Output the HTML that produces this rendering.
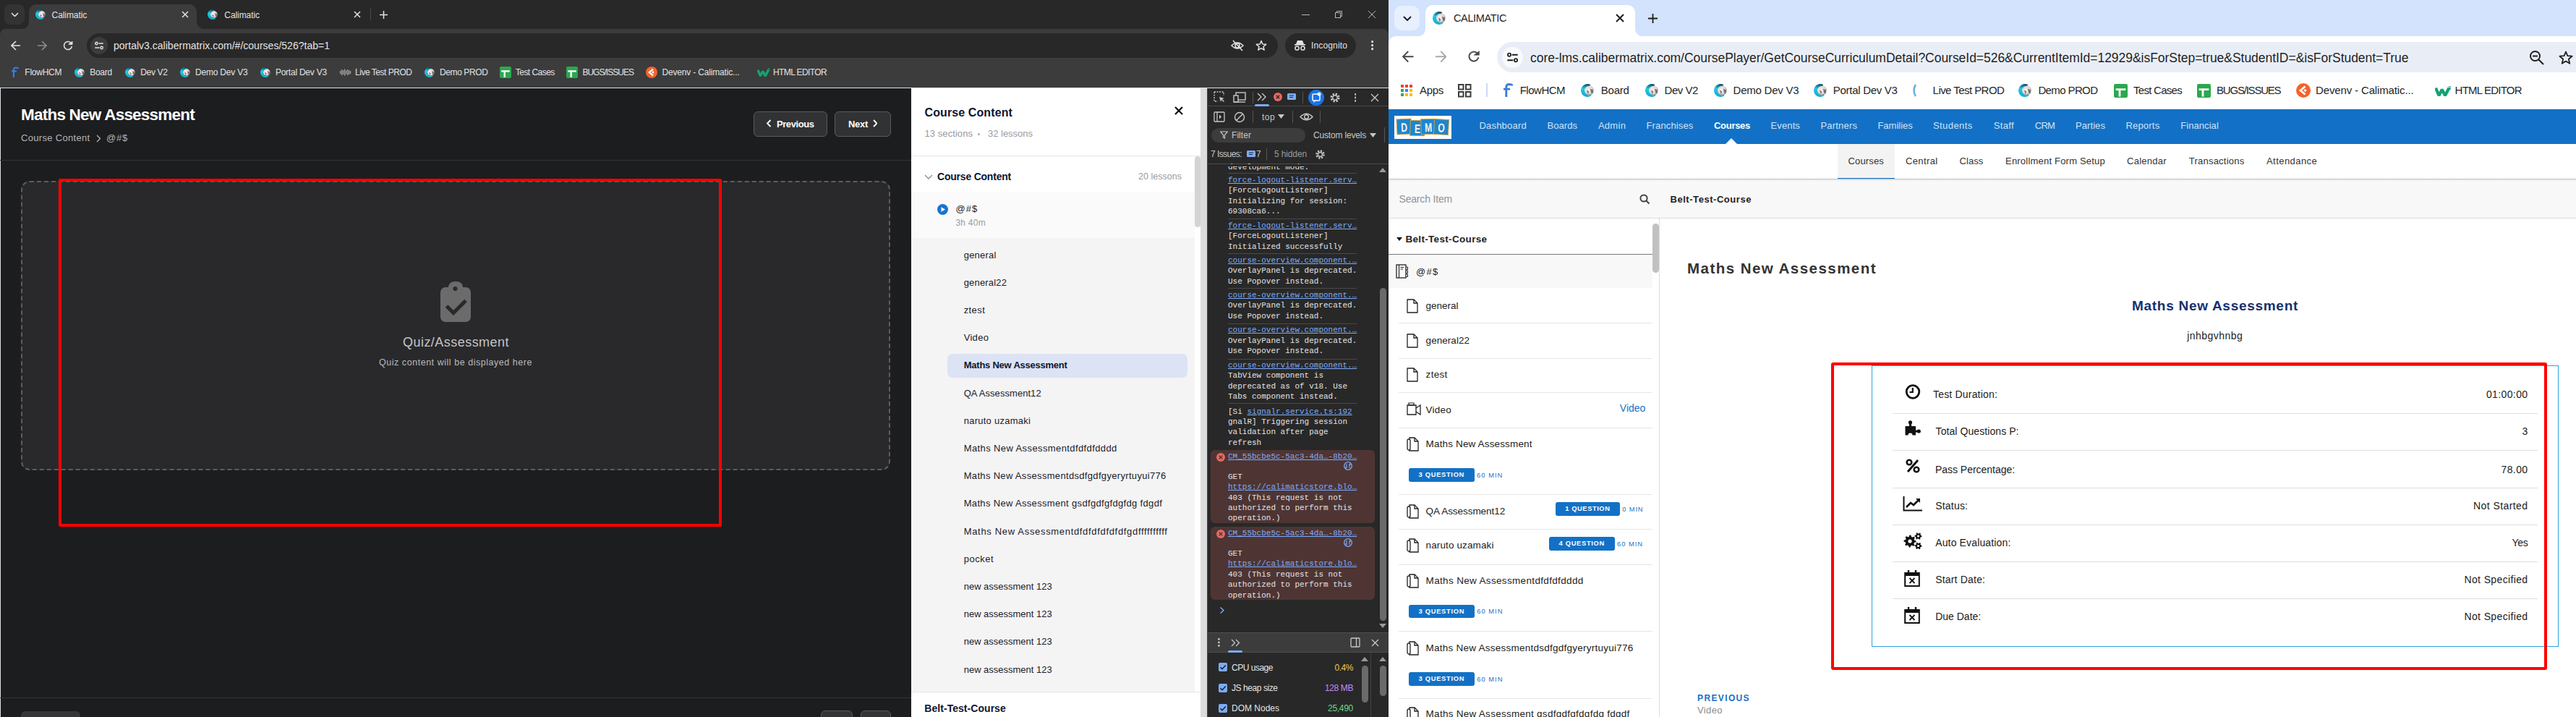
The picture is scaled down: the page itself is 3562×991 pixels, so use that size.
<!DOCTYPE html>
<html><head><meta charset="utf-8"><title>Calimatic</title>
<style>
html,body{margin:0;padding:0}
body{width:3562px;height:991px;position:relative;overflow:hidden;background:#fff;font-family:"Liberation Sans",sans-serif}
body>div,body>span,body>svg{position:absolute;box-sizing:border-box}
body>span{white-space:pre}

</style></head><body>
<div style='left:0px;top:0px;width:1920px;height:991px;background:#282828'></div>
<div style='left:6px;top:6px;width:28px;height:28px;background:#333333;border-radius:8px'></div>
<svg style='left:14.5px;top:16.75px;' width='11' height='6.5' viewBox='0 0 11 6.5'><path d='M1 1L5.5 5.5L10 1' stroke='#e3e3e3' stroke-width='1.6' fill='none'/></svg>
<div style='left:40px;top:6px;width:232px;height:40px;background:#3c3c3c;border-radius:10px 10px 0 0'></div>
<div style='left:30px;top:30px;width:10px;height:10px;background:radial-gradient(circle at 0 0, #282828 9.5px, #3c3c3c 10.5px)'></div>
<div style='left:272px;top:30px;width:10px;height:10px;background:radial-gradient(circle at 100% 0, #282828 9.5px, #3c3c3c 10.5px)'></div>
<svg style='left:48px;top:12px;' width='16' height='16' viewBox='0 0 16 16'><defs><radialGradient id='gw1' cx='0.45' cy='0.45' r='0.6'><stop offset='0' stop-color='#fbf6f6'/><stop offset='0.7' stop-color='#e6d2d2'/><stop offset='1' stop-color='#7a6a6a'/></radialGradient><linearGradient id='gc1' x1='0.6' y1='0' x2='0.3' y2='1'><stop offset='0' stop-color='#0a4f60'/><stop offset='0.45' stop-color='#1fcbe8'/><stop offset='1' stop-color='#12a7c6'/></linearGradient></defs><circle cx='9.82' cy='8.00' r='4.90' fill='url(#gw1)'/><path d='M10.55 6.29q2.45 0.24 3.67 1.47l-0.24 3.43q-1.71 0.49 -2.45 -1.96q0.49 -1.47 -0.98 -2.94z M7.37 8.00q1.71 -0.24 2.20 1.47l-0.98 2.69z' fill='#707070'/><path d='M11.29 1.82A7.00 7.00 0 1 0 12.31 13.52L12.12 12.33A4.90 4.90 0 1 1 10.67 3.17z' fill='url(#gc1)'/></svg>
<span style='left:71.6px;top:15.24px;font:400 12px/12px "Liberation Sans", sans-serif;color:#e3e3e3;letter-spacing:-0.083px;'>Calimatic</span>
<svg style='left:251.0px;top:15.0px;' width='10' height='10' viewBox='0 0 10 10'><path d='M1 1L9 9M9 1L1 9' stroke='#e3e3e3' stroke-width='1.5' fill='none'/></svg>
<svg style='left:286px;top:12px;' width='16' height='16' viewBox='0 0 16 16'><defs><radialGradient id='gw2' cx='0.45' cy='0.45' r='0.6'><stop offset='0' stop-color='#fbf6f6'/><stop offset='0.7' stop-color='#e6d2d2'/><stop offset='1' stop-color='#7a6a6a'/></radialGradient><linearGradient id='gc2' x1='0.6' y1='0' x2='0.3' y2='1'><stop offset='0' stop-color='#0a4f60'/><stop offset='0.45' stop-color='#1fcbe8'/><stop offset='1' stop-color='#12a7c6'/></linearGradient></defs><circle cx='9.82' cy='8.00' r='4.90' fill='url(#gw2)'/><path d='M10.55 6.29q2.45 0.24 3.67 1.47l-0.24 3.43q-1.71 0.49 -2.45 -1.96q0.49 -1.47 -0.98 -2.94z M7.37 8.00q1.71 -0.24 2.20 1.47l-0.98 2.69z' fill='#707070'/><path d='M11.29 1.82A7.00 7.00 0 1 0 12.31 13.52L12.12 12.33A4.90 4.90 0 1 1 10.67 3.17z' fill='url(#gc2)'/></svg>
<span style='left:310.3px;top:15.24px;font:400 12px/12px "Liberation Sans", sans-serif;color:#e3e3e3;letter-spacing:-0.083px;'>Calimatic</span>
<svg style='left:489.0px;top:15.0px;' width='10' height='10' viewBox='0 0 10 10'><path d='M1 1L9 9M9 1L1 9' stroke='#e3e3e3' stroke-width='1.5' fill='none'/></svg>
<div style='left:512px;top:12px;width:1px;height:16px;background:#4a4a4a'></div>
<svg style='left:523.5px;top:13.5px;' width='13' height='13' viewBox='0 0 13 13'><path d='M6.5 1V12M1 6.5H12' stroke='#e3e3e3' stroke-width='1.5' fill='none'/></svg>
<div style='left:1800px;top:20px;width:11px;height:1px;background:#b5b5b5'></div>
<svg style='left:1845px;top:14px;' width='12' height='12' viewBox='0 0 12 12'><rect x='1.5' y='3.5' width='7' height='7' fill='none' stroke='#b5b5b5'/><path d='M3.5 3.5V1.5H10.5V8.5H8.5' fill='none' stroke='#b5b5b5'/></svg>
<svg style='left:1891.0px;top:14.0px;' width='12' height='12' viewBox='0 0 12 12'><path d='M1 1L11 11M11 1L1 11' stroke='#b5b5b5' stroke-width='1' fill='none'/></svg>
<div style='left:0px;top:40px;width:1920px;height:81px;background:#3c3c3c;border-radius:8px 8px 0 0'></div>
<svg style='left:15.0px;top:56.0px;' width='14' height='14' viewBox='0 0 14 14'><path d='M13 7.0H1.5M7.0 1L1 7.0L7.0 13' stroke='#e3e3e3' stroke-width='1.6' fill='none'/></svg>
<svg style='left:50.8px;top:56.0px;' width='14' height='14' viewBox='0 0 14 14'><path d='M1 7.0H12.5M7.0 1L13 7.0L7.0 13' stroke='#8d8d8d' stroke-width='1.6' fill='none'/></svg>
<svg style='left:85.0px;top:54.0px;' width='18' height='18' viewBox='0 0 18 18'><path d='M14.42 9.96A5.50 5.50 0 1 1 12.68 4.91' stroke='#e3e3e3' stroke-width='1.6' fill='none'/><path d='M15.03 3.22V7.35H9.82z' fill='#e3e3e3' stroke='#e3e3e3' stroke-width='0.96' stroke-linejoin='miter'/></svg>
<div style='left:120px;top:46px;width:1647px;height:34px;background:#282828;border-radius:17px'></div>
<div style='left:125px;top:51px;width:24px;height:24px;background:#3c3c3c;border-radius:12px'></div>
<svg style='left:131.0px;top:57.0px;' width='12' height='12' viewBox='0 0 12 12'><circle cx='2.4000000000000004' cy='3.0' r='1.6800000000000002' stroke='#e3e3e3' stroke-width='1.4' fill='none'/><path d='M5.4 3.0H11.76M0.24 9.0H6.6000000000000005' stroke='#e3e3e3' stroke-width='1.4'/><circle cx='9.600000000000001' cy='9.0' r='1.6800000000000002' stroke='#e3e3e3' stroke-width='1.4' fill='none'/></svg>
<span style='left:157px;top:56.35px;font:400 14px/14px "Liberation Sans", sans-serif;color:#e3e3e3;letter-spacing:0.012px;'>portalv3.calibermatrix.com/#/courses/526?tab=1</span>
<svg style='left:1701px;top:54px;' width='20' height='18' viewBox='0 0 20 18'><path d='M2 9Q10 1 18 9Q10 17 2 9z' fill='none' stroke='#e3e3e3' stroke-width='1.6'/><circle cx='10' cy='9' r='3' fill='none' stroke='#e3e3e3' stroke-width='1.6'/><path d='M4 2L17 16' stroke='#e3e3e3' stroke-width='1.6'/></svg>
<svg style='left:1736.0px;top:55.0px;' width='16' height='16' viewBox='0 0 16 16'><polygon points='8.00,1.50 9.85,5.95 14.66,6.34 11.00,9.47 12.11,14.16 8.00,11.65 3.89,14.16 5.00,9.47 1.34,6.34 6.15,5.95' stroke='#e3e3e3' stroke-width='1.5' fill='none' stroke-linejoin='round'/></svg>
<div style='left:1777px;top:46px;width:98px;height:34px;background:#282828;border-radius:17px'></div>
<svg style='left:1789px;top:55px;' width='17' height='16' viewBox='0 0 17 16'><path d='M3 6H14L12 1H5z' fill='#e3e3e3'/><rect x='1' y='6' width='15' height='1.6' fill='#e3e3e3'/><circle cx='4.5' cy='11.5' r='2.6' fill='none' stroke='#e3e3e3' stroke-width='1.5'/><circle cx='12.5' cy='11.5' r='2.6' fill='none' stroke='#e3e3e3' stroke-width='1.5'/></svg>
<span style='left:1813px;top:56.84px;font:400 12px/12px "Liberation Sans", sans-serif;color:#e3e3e3;letter-spacing:0.144px;'>Incognito</span>
<svg style='left:1895.9px;top:56.4px;' width='3.2' height='13.2' viewBox='0 0 3.2 13.2'><circle cx='1.6' cy='1.6' r='1.6' fill='#e3e3e3'/><circle cx='1.6' cy='6.6' r='1.6' fill='#e3e3e3'/><circle cx='1.6' cy='11.6' r='1.6' fill='#e3e3e3'/></svg>
<svg style='left:15px;top:92px;' width='11.799999999999999' height='16' viewBox='0 0 11.799999999999999 16'><path d='M3.9399999999999995 15V4.8999999999999995Q3.9399999999999995 1.5 6.369999999999999 1.5Q10.299999999999999 1.5 10.299999999999999 2.8000000000000003M1 6.3H7.84' stroke='#3d7bd8' stroke-width='2.24' fill='none'/></svg>
<span style='left:34.3px;top:94.04px;font:400 12px/12px "Liberation Sans", sans-serif;color:#e3e3e3;letter-spacing:-0.239px;'>FlowHCM</span>
<svg style='left:101.5px;top:91.7px;' width='16' height='16' viewBox='0 0 16 16'><defs><radialGradient id='gw3' cx='0.45' cy='0.45' r='0.6'><stop offset='0' stop-color='#fbf6f6'/><stop offset='0.7' stop-color='#e6d2d2'/><stop offset='1' stop-color='#7a6a6a'/></radialGradient><linearGradient id='gc3' x1='0.6' y1='0' x2='0.3' y2='1'><stop offset='0' stop-color='#0a4f60'/><stop offset='0.45' stop-color='#1fcbe8'/><stop offset='1' stop-color='#12a7c6'/></linearGradient></defs><circle cx='9.82' cy='8.00' r='4.90' fill='url(#gw3)'/><path d='M10.55 6.29q2.45 0.24 3.67 1.47l-0.24 3.43q-1.71 0.49 -2.45 -1.96q0.49 -1.47 -0.98 -2.94z M7.37 8.00q1.71 -0.24 2.20 1.47l-0.98 2.69z' fill='#707070'/><path d='M11.29 1.82A7.00 7.00 0 1 0 12.31 13.52L12.12 12.33A4.90 4.90 0 1 1 10.67 3.17z' fill='url(#gc3)'/></svg>
<span style='left:124.2px;top:94.04px;font:400 12px/12px "Liberation Sans", sans-serif;color:#e3e3e3;letter-spacing:-0.246px;'>Board</span>
<svg style='left:171.7px;top:91.7px;' width='16' height='16' viewBox='0 0 16 16'><defs><radialGradient id='gw4' cx='0.45' cy='0.45' r='0.6'><stop offset='0' stop-color='#fbf6f6'/><stop offset='0.7' stop-color='#e6d2d2'/><stop offset='1' stop-color='#7a6a6a'/></radialGradient><linearGradient id='gc4' x1='0.6' y1='0' x2='0.3' y2='1'><stop offset='0' stop-color='#0a4f60'/><stop offset='0.45' stop-color='#1fcbe8'/><stop offset='1' stop-color='#12a7c6'/></linearGradient></defs><circle cx='9.82' cy='8.00' r='4.90' fill='url(#gw4)'/><path d='M10.55 6.29q2.45 0.24 3.67 1.47l-0.24 3.43q-1.71 0.49 -2.45 -1.96q0.49 -1.47 -0.98 -2.94z M7.37 8.00q1.71 -0.24 2.20 1.47l-0.98 2.69z' fill='#707070'/><path d='M11.29 1.82A7.00 7.00 0 1 0 12.31 13.52L12.12 12.33A4.90 4.90 0 1 1 10.67 3.17z' fill='url(#gc4)'/></svg>
<span style='left:194.3px;top:94.04px;font:400 12px/12px "Liberation Sans", sans-serif;color:#e3e3e3;letter-spacing:-0.343px;'>Dev V2</span>
<svg style='left:248px;top:91.7px;' width='16' height='16' viewBox='0 0 16 16'><defs><radialGradient id='gw5' cx='0.45' cy='0.45' r='0.6'><stop offset='0' stop-color='#fbf6f6'/><stop offset='0.7' stop-color='#e6d2d2'/><stop offset='1' stop-color='#7a6a6a'/></radialGradient><linearGradient id='gc5' x1='0.6' y1='0' x2='0.3' y2='1'><stop offset='0' stop-color='#0a4f60'/><stop offset='0.45' stop-color='#1fcbe8'/><stop offset='1' stop-color='#12a7c6'/></linearGradient></defs><circle cx='9.82' cy='8.00' r='4.90' fill='url(#gw5)'/><path d='M10.55 6.29q2.45 0.24 3.67 1.47l-0.24 3.43q-1.71 0.49 -2.45 -1.96q0.49 -1.47 -0.98 -2.94z M7.37 8.00q1.71 -0.24 2.20 1.47l-0.98 2.69z' fill='#707070'/><path d='M11.29 1.82A7.00 7.00 0 1 0 12.31 13.52L12.12 12.33A4.90 4.90 0 1 1 10.67 3.17z' fill='url(#gc5)'/></svg>
<span style='left:270px;top:94.04px;font:400 12px/12px "Liberation Sans", sans-serif;color:#e3e3e3;letter-spacing:-0.209px;'>Demo Dev V3</span>
<svg style='left:359px;top:91.7px;' width='16' height='16' viewBox='0 0 16 16'><defs><radialGradient id='gw6' cx='0.45' cy='0.45' r='0.6'><stop offset='0' stop-color='#fbf6f6'/><stop offset='0.7' stop-color='#e6d2d2'/><stop offset='1' stop-color='#7a6a6a'/></radialGradient><linearGradient id='gc6' x1='0.6' y1='0' x2='0.3' y2='1'><stop offset='0' stop-color='#0a4f60'/><stop offset='0.45' stop-color='#1fcbe8'/><stop offset='1' stop-color='#12a7c6'/></linearGradient></defs><circle cx='9.82' cy='8.00' r='4.90' fill='url(#gw6)'/><path d='M10.55 6.29q2.45 0.24 3.67 1.47l-0.24 3.43q-1.71 0.49 -2.45 -1.96q0.49 -1.47 -0.98 -2.94z M7.37 8.00q1.71 -0.24 2.20 1.47l-0.98 2.69z' fill='#707070'/><path d='M11.29 1.82A7.00 7.00 0 1 0 12.31 13.52L12.12 12.33A4.90 4.90 0 1 1 10.67 3.17z' fill='url(#gc6)'/></svg>
<span style='left:380.9px;top:94.04px;font:400 12px/12px "Liberation Sans", sans-serif;color:#e3e3e3;letter-spacing:-0.234px;'>Portal Dev V3</span>
<svg style='left:586px;top:91.7px;' width='16' height='16' viewBox='0 0 16 16'><defs><radialGradient id='gw7' cx='0.45' cy='0.45' r='0.6'><stop offset='0' stop-color='#fbf6f6'/><stop offset='0.7' stop-color='#e6d2d2'/><stop offset='1' stop-color='#7a6a6a'/></radialGradient><linearGradient id='gc7' x1='0.6' y1='0' x2='0.3' y2='1'><stop offset='0' stop-color='#0a4f60'/><stop offset='0.45' stop-color='#1fcbe8'/><stop offset='1' stop-color='#12a7c6'/></linearGradient></defs><circle cx='9.82' cy='8.00' r='4.90' fill='url(#gw7)'/><path d='M10.55 6.29q2.45 0.24 3.67 1.47l-0.24 3.43q-1.71 0.49 -2.45 -1.96q0.49 -1.47 -0.98 -2.94z M7.37 8.00q1.71 -0.24 2.20 1.47l-0.98 2.69z' fill='#707070'/><path d='M11.29 1.82A7.00 7.00 0 1 0 12.31 13.52L12.12 12.33A4.90 4.90 0 1 1 10.67 3.17z' fill='url(#gc7)'/></svg>
<span style='left:608px;top:94.04px;font:400 12px/12px "Liberation Sans", sans-serif;color:#e3e3e3;letter-spacing:-0.402px;'>Demo PROD</span>
<svg style='left:470px;top:94.7px;' width='16' height='10' viewBox='0 0 16 10'><rect x='0.00' y='3.00' width='1.20' height='4' fill='#aaa'/><rect x='2.00' y='1.00' width='1.20' height='8' fill='#aaa'/><rect x='4.00' y='2.00' width='1.20' height='6' fill='#aaa'/><rect x='6.00' y='0.50' width='1.20' height='9' fill='#aaa'/><rect x='8.00' y='2.50' width='1.20' height='5' fill='#aaa'/><rect x='10.00' y='1.00' width='1.20' height='8' fill='#aaa'/><rect x='12.00' y='2.00' width='1.20' height='6' fill='#aaa'/><rect x='14.00' y='3.00' width='1.20' height='4' fill='#aaa'/></svg>
<span style='left:491px;top:94.04px;font:400 12px/12px "Liberation Sans", sans-serif;color:#e3e3e3;letter-spacing:-0.475px;'>Live Test PROD</span>
<svg style='left:690.7px;top:92px;' width='16' height='16' viewBox='0 0 16 16'><rect x='0' y='0' width='16' height='16' rx='1.92' fill='#2aa84f'/><path d='M2.24 6.4H13.76M6.72 6.4V14.72' stroke='#fff' stroke-width='2.4'/></svg>
<span style='left:712.8px;top:94.04px;font:400 12px/12px "Liberation Sans", sans-serif;color:#e3e3e3;letter-spacing:-0.536px;'>Test Cases</span>
<svg style='left:782.5px;top:92px;' width='16' height='16' viewBox='0 0 16 16'><rect x='0' y='0' width='16' height='16' rx='1.92' fill='#2aa84f'/><path d='M2.24 6.4H13.76M6.72 6.4V14.72' stroke='#fff' stroke-width='2.4'/></svg>
<span style='left:805.4px;top:94.04px;font:400 12px/12px "Liberation Sans", sans-serif;color:#e3e3e3;letter-spacing:-0.978px;'>BUGS/ISSUES</span>
<svg style='left:893px;top:91.7px;' width='16' height='16' viewBox='0 0 16 16'><circle cx='8' cy='8' r='8' fill='#f4632a'/><path d='M10.0 3.6L4.8 8L10.0 12.4' stroke='#fff' stroke-width='2.24' fill='none'/><circle cx='10.0' cy='8' r='1.44' fill='#fff'/></svg>
<span style='left:915.5px;top:94.04px;font:400 12px/12px "Liberation Sans", sans-serif;color:#e3e3e3;letter-spacing:-0.176px;'>Devenv - Calimatic...</span>
<svg style='left:1047px;top:93px;' width='19.6' height='14' viewBox='0 0 19.6 14'><path d='M1 3.5999999999999996L4.368000000000001 12L7.800000000000001 5.4L11.232000000000001 12L15.600000000000001 3.5999999999999996' stroke='#14a36f' stroke-width='3.36' fill='none' stroke-linejoin='bevel'/><text x='14.352000000000002' y='5.4' font-size='6.0' fill='#14a36f' font-family='Liberation Sans' font-weight='bold'>3</text></svg>
<span style='left:1069px;top:94.04px;font:400 12px/12px "Liberation Sans", sans-serif;color:#e3e3e3;letter-spacing:-0.607px;'>HTML EDITOR</span>
<div style='left:0px;top:121px;width:1920px;height:1px;background:#dfe1e5'></div>
<div style='left:0px;top:122px;width:1260px;height:869px;background:#1c1d1f;border-left:1px solid #dfe1e5'></div>
<span style='left:29px;top:147.65px;font:700 22.5px/22.5px "Liberation Sans", sans-serif;color:#ffffff;letter-spacing:-0.776px;'>Maths New Assessment</span>
<span style='left:29px;top:183.60px;font:400 13px/13px "Liberation Sans", sans-serif;color:#b4b4b8;letter-spacing:0.317px;'>Course Content</span>
<svg style='left:132.75px;top:185.5px;' width='6.5' height='11' viewBox='0 0 6.5 11'><path d='M1 1L5.5 5.5L1 10' stroke='#b4b4b8' stroke-width='1.3' fill='none'/></svg>
<span style='left:147px;top:183.60px;font:400 13px/13px "Liberation Sans", sans-serif;color:#b4b4b8;letter-spacing:0.776px;'>@#$</span>
<div style='left:1042px;top:154px;width:102px;height:35px;background:#313234;border:1px solid #5a5b5e;border-radius:6px'></div>
<svg style='left:1060.25px;top:165.0px;' width='6.5' height='11' viewBox='0 0 6.5 11'><path d='M5.5 1L1 5.5L5.5 10' stroke='#ffffff' stroke-width='1.9' fill='none'/></svg>
<span style='left:1074px;top:165.00px;font:700 13px/13px "Liberation Sans", sans-serif;color:#ffffff;letter-spacing:-0.428px;'>Previous</span>
<div style='left:1154px;top:154px;width:78px;height:35px;background:#313234;border:1px solid #5a5b5e;border-radius:6px'></div>
<span style='left:1173px;top:165.00px;font:700 13px/13px "Liberation Sans", sans-serif;color:#ffffff;letter-spacing:-0.297px;'>Next</span>
<svg style='left:1206.75px;top:165.0px;' width='6.5' height='11' viewBox='0 0 6.5 11'><path d='M1 1L5.5 5.5L1 10' stroke='#ffffff' stroke-width='1.9' fill='none'/></svg>
<div style='left:0px;top:221px;width:1260px;height:1px;background:#333437'></div>
<div style='left:29px;top:250px;width:1202px;height:400px;background:#29292b;border:2px dashed #5c5c5e;border-radius:12px'></div>
<svg style='left:608px;top:389px;' width='44' height='57' viewBox='0 0 44 57'><rect x='1' y='8' width='42' height='48' rx='7' fill='#6b6b6b'/><rect x='12' y='0' width='20' height='16' rx='9' fill='#6b6b6b'/><circle cx='21.5' cy='10' r='3' fill='#29292b'/><path d='M9.5 34L19 43.5L36 26.5' stroke='#29292b' stroke-width='5' fill='none'/></svg>
<span style='left:630.5px;top:463.76px;transform:translateX(-50%);font:400 18px/18px "Liberation Sans", sans-serif;color:#c4c4c6;letter-spacing:0.464px;'>Quiz/Assessment</span>
<span style='left:630px;top:495.42px;transform:translateX(-50%);font:400 12.5px/12.5px "Liberation Sans", sans-serif;color:#b9b9bb;letter-spacing:0.538px;'>Quiz content will be displayed here</span>
<div style='left:0px;top:964px;width:1260px;height:1px;background:#333437'></div>
<div style='left:29px;top:983px;width:82px;height:20px;background:#353638;border-radius:6px'></div>
<div style='left:1135px;top:982px;width:44px;height:20px;background:#333436;border:1px solid #58595c;border-radius:6px'></div>
<div style='left:1190px;top:982px;width:42px;height:20px;background:#333436;border:1px solid #58595c;border-radius:6px'></div>
<div style='left:81px;top:247px;width:917px;height:481px;border:4px solid #ff0000;border-radius:2px'></div>
<div style='left:1260px;top:122px;width:410px;height:869px;background:#ffffff'></div>
<span style='left:1278.5px;top:147.96px;font:700 16px/16px "Liberation Sans", sans-serif;color:#0e1630;letter-spacing:0.107px;'>Course Content</span>
<svg style='left:1623.5px;top:147.0px;' width='12' height='12' viewBox='0 0 12 12'><path d='M1 1L11 11M11 1L1 11' stroke='#000000' stroke-width='2' fill='none'/></svg>
<span style='left:1278.5px;top:177.50px;font:400 13px/13px "Liberation Sans", sans-serif;color:#9a9aa0;letter-spacing:0.067px;'>13 sections</span>
<div style='left:1352px;top:184px;width:3px;height:3px;background:#aaa;border-radius:2px'></div>
<span style='left:1366px;top:177.50px;font:400 13px/13px "Liberation Sans", sans-serif;color:#9a9aa0;letter-spacing:-0.016px;'>32 lessons</span>
<div style='left:1260px;top:215px;width:400px;height:1px;background:#e6e6e6'></div>
<svg style='left:1278.0px;top:240.5px;' width='12' height='7.0' viewBox='0 0 12 7.0'><path d='M1 1L6.0 6.0L11 1' stroke='#8a8a90' stroke-width='1.3' fill='none'/></svg>
<span style='left:1296px;top:236.55px;font:700 14px/14px "Liberation Sans", sans-serif;color:#0e1630;letter-spacing:-0.214px;'>Course Content</span>
<span style='right:1928px;top:237.82px;font:400 12.5px/12.5px "Liberation Sans", sans-serif;color:#9a9aa0;letter-spacing:0.023px;'>20 lessons</span>
<div style='left:1260px;top:266px;width:392px;height:63px;background:#fafafa'></div>
<svg style='left:1296px;top:282px;' width='15' height='15' viewBox='0 0 15 15'><circle cx='7.5' cy='7.5' r='7.5' fill='#1a73d1'/><path d='M5.5 4.2V10.8L11 7.5z' fill='#fff'/></svg>
<span style='left:1321.4px;top:281.50px;font:400 13px/13px "Liberation Sans", sans-serif;color:#1b1b2a;letter-spacing:1.109px;'>@#$</span>
<span style='left:1321.4px;top:301.84px;font:400 12px/12px "Liberation Sans", sans-serif;color:#9a9aa0;letter-spacing:0.245px;'>3h 40m</span>
<div style='left:1260px;top:329px;width:392px;height:627px;background:#f4f4f4'></div>
<span style='left:1332.7px;top:345.60px;font:400 13px/13px "Liberation Sans", sans-serif;color:#1b1b2a;letter-spacing:0.232px;'>general</span>
<span style='left:1332.7px;top:383.80px;font:400 13px/13px "Liberation Sans", sans-serif;color:#1b1b2a;letter-spacing:0.186px;'>general22</span>
<span style='left:1332.7px;top:422.00px;font:400 13px/13px "Liberation Sans", sans-serif;color:#1b1b2a;letter-spacing:0.406px;'>ztest</span>
<span style='left:1332.7px;top:460.20px;font:400 13px/13px "Liberation Sans", sans-serif;color:#1b1b2a;letter-spacing:0.297px;'>Video</span>
<div style='left:1310px;top:489px;width:332px;height:33px;background:#dbe3f4;border-radius:7px'></div>
<span style='left:1332.7px;top:498.40px;font:700 13px/13px "Liberation Sans", sans-serif;color:#0e1630;letter-spacing:-0.232px;'>Maths New Assessment</span>
<span style='left:1332.7px;top:536.60px;font:400 13px/13px "Liberation Sans", sans-serif;color:#1b1b2a;letter-spacing:0.051px;'>QA Assessment12</span>
<span style='left:1332.7px;top:574.80px;font:400 13px/13px "Liberation Sans", sans-serif;color:#1b1b2a;letter-spacing:0.258px;'>naruto uzamaki</span>
<span style='left:1332.7px;top:613.00px;font:400 13px/13px "Liberation Sans", sans-serif;color:#1b1b2a;letter-spacing:0.394px;'>Maths New Assessmentdfdfdfdddd</span>
<span style='left:1332.7px;top:651.20px;font:400 13px/13px "Liberation Sans", sans-serif;color:#1b1b2a;letter-spacing:0.326px;'>Maths New Assessmentdsdfgdfgyeryrtuyui776</span>
<span style='left:1332.7px;top:689.40px;font:400 13px/13px "Liberation Sans", sans-serif;color:#1b1b2a;letter-spacing:0.332px;'>Maths New Assessment gsdfgdfgfdgfdg fdgdf</span>
<span style='left:1332.7px;top:727.60px;font:400 13px/13px "Liberation Sans", sans-serif;color:#1b1b2a;letter-spacing:0.676px;'>Maths New Assessmentdfdfdfdfdfdfgdffffffffff</span>
<span style='left:1332.7px;top:765.80px;font:400 13px/13px "Liberation Sans", sans-serif;color:#1b1b2a;letter-spacing:0.531px;'>pocket</span>
<span style='left:1332.7px;top:804.00px;font:400 13px/13px "Liberation Sans", sans-serif;color:#1b1b2a;letter-spacing:-0.007px;'>new assessment 123</span>
<span style='left:1332.7px;top:842.20px;font:400 13px/13px "Liberation Sans", sans-serif;color:#1b1b2a;letter-spacing:-0.007px;'>new assessment 123</span>
<span style='left:1332.7px;top:880.40px;font:400 13px/13px "Liberation Sans", sans-serif;color:#1b1b2a;letter-spacing:-0.007px;'>new assessment 123</span>
<span style='left:1332.7px;top:918.60px;font:400 13px/13px "Liberation Sans", sans-serif;color:#1b1b2a;letter-spacing:-0.007px;'>new assessment 123</span>
<div style='left:1652px;top:216px;width:8px;height:98px;background:#d4d4d4;border-radius:4px'></div>
<div style='left:1260px;top:956px;width:400px;height:1px;background:#e6e6e6'></div>
<span style='left:1278.3px;top:971.95px;font:700 14px/14px "Liberation Sans", sans-serif;color:#0e1630;letter-spacing:0.046px;'>Belt-Test-Course</span>
<div style='left:1660px;top:122px;width:9px;height:869px;background:#dcdcdc'></div>
<div style='left:1669px;top:122px;width:1px;height:869px;background:#4a4a4a'></div>
<div style='left:1670px;top:122px;width:250px;height:869px;background:#282828'></div>
<div style='left:1670px;top:146px;width:250px;height:1px;background:#4a4a4a'></div>
<svg style='left:1678px;top:126px;' width='17' height='17' viewBox='0 0 17 17'><path d='M1 1H14V6M1 1V14H6' stroke='#c7c7c7' stroke-width='1.4' fill='none' stroke-dasharray='2 1.5'/><path d='M8 8L15 10L12 11L15 14L14 15L11 12L10 15z' fill='#c7c7c7'/></svg>
<svg style='left:1705px;top:127px;' width='18' height='15' viewBox='0 0 18 15'><rect x='4' y='1' width='13' height='10' fill='none' stroke='#c7c7c7' stroke-width='1.4'/><rect x='1' y='5' width='6' height='9' fill='#282828' stroke='#c7c7c7' stroke-width='1.4'/><path d='M1 14H17' stroke='#c7c7c7' stroke-width='1.4'/></svg>
<div style='left:1732px;top:127px;width:1px;height:16px;background:#555'></div>
<svg style='left:1738px;top:128px;' width='14' height='12' viewBox='0 0 14 12'><path d='M1 1L6 6L1 11M7 1L12 6L7 11' stroke='#c7c7c7' stroke-width='1.4' fill='none'/></svg>
<div style='left:1735px;top:144px;width:20px;height:3px;background:#7cacf8;border-radius:2px'></div>
<svg style='left:1761px;top:128px;' width='12' height='12' viewBox='0 0 12 12'><circle cx='6' cy='6' r='6' fill='#e46962'/><path d='M3.8 3.8L8.2 8.2M8.2 3.8L3.8 8.2' stroke='#282828' stroke-width='1.3'/></svg>
<svg style='left:1780px;top:129px;' width='12' height='11' viewBox='0 0 12 11'><rect x='0' y='0' width='12' height='9' rx='1.5' fill='#7cacf8'/><path d='M3 3H9M3 5.5H8' stroke='#282828' stroke-width='1'/></svg>
<div style='left:1801px;top:127px;width:1px;height:16px;background:#555'></div>
<svg style='left:1809px;top:124px;' width='22' height='22' viewBox='0 0 22 22'><circle cx='11' cy='11' r='11' fill='#1a73e8'/><rect x='6' y='6' width='10' height='9' rx='1.5' fill='none' stroke='#fff' stroke-width='1.5'/><path d='M8 15L7 18L11 15' fill='#fff'/><circle cx='15' cy='6' r='2.5' fill='#fff'/></svg>
<svg style='left:1838px;top:127px;' width='16' height='16' viewBox='0 0 16 16'><circle cx='8' cy='8' r='5.2' fill='none' stroke='#c7c7c7' stroke-width='2.6' stroke-dasharray='2.2 1.9'/><circle cx='8' cy='8' r='3.2' fill='none' stroke='#c7c7c7' stroke-width='1.4'/></svg>
<svg style='left:1872.6px;top:129.1px;' width='2.8' height='11.8' viewBox='0 0 2.8 11.8'><circle cx='1.4' cy='1.4' r='1.4' fill='#c7c7c7'/><circle cx='1.4' cy='5.9' r='1.4' fill='#c7c7c7'/><circle cx='1.4' cy='10.4' r='1.4' fill='#c7c7c7'/></svg>
<svg style='left:1895.0px;top:129.0px;' width='12' height='12' viewBox='0 0 12 12'><path d='M1 1L11 11M11 1L1 11' stroke='#c7c7c7' stroke-width='1.4' fill='none'/></svg>
<svg style='left:1678px;top:154px;' width='16' height='15' viewBox='0 0 16 15'><rect x='1' y='1' width='14' height='13' rx='1' fill='none' stroke='#c7c7c7' stroke-width='1.3'/><path d='M5 1V14' stroke='#c7c7c7' stroke-width='1.3'/><path d='M8 4.5L11 7.5L8 10.5z' fill='#c7c7c7'/></svg>
<svg style='left:1706px;top:154px;' width='16' height='16' viewBox='0 0 16 16'><circle cx='8' cy='8' r='6.5' fill='none' stroke='#c7c7c7' stroke-width='1.4'/><path d='M3.5 12.5L12.5 3.5' stroke='#c7c7c7' stroke-width='1.4'/></svg>
<div style='left:1732px;top:153px;width:1px;height:17px;background:#555'></div>
<span style='left:1745px;top:155.84px;font:400 12px/12px "Liberation Sans", sans-serif;color:#c7c7c7;letter-spacing:0.438px;'>top</span>
<svg style='left:1767px;top:158px;' width='9' height='6' viewBox='0 0 9 6'><path d='M0 0H9L4.5 6z' fill='#c7c7c7'/></svg>
<div style='left:1787px;top:153px;width:1px;height:17px;background:#555'></div>
<svg style='left:1797px;top:155px;' width='19' height='13' viewBox='0 0 19 13'><path d='M1 6.5Q9.5 -2 18 6.5Q9.5 15 1 6.5z' fill='none' stroke='#c7c7c7' stroke-width='1.4'/><circle cx='9.5' cy='6.5' r='2.8' fill='none' stroke='#c7c7c7' stroke-width='1.4'/></svg>
<div style='left:1825px;top:153px;width:1px;height:17px;background:#555'></div>
<div style='left:1675px;top:177px;width:130px;height:20px;background:#3c3c3c;border-radius:10px'></div>
<svg style='left:1687px;top:181px;' width='11' height='11' viewBox='0 0 11 11'><path d='M0.5 1H10.5L6.5 5.5V10L4.5 9V5.5z' fill='none' stroke='#c7c7c7' stroke-width='1.2'/></svg>
<span style='left:1703px;top:181.34px;font:400 12px/12px "Liberation Sans", sans-serif;color:#c7c7c7;letter-spacing:0.055px;'>Filter</span>
<span style='left:1816px;top:181.34px;font:400 12px/12px "Liberation Sans", sans-serif;color:#c7c7c7;letter-spacing:-0.181px;'>Custom levels</span>
<svg style='left:1894px;top:184px;' width='9' height='6' viewBox='0 0 9 6'><path d='M0 0H9L4.5 6z' fill='#c7c7c7'/></svg>
<div style='left:1914px;top:176px;width:1px;height:21px;background:#555'></div>
<span style='left:1674px;top:207.34px;font:400 12px/12px "Liberation Sans", sans-serif;color:#c7c7c7;letter-spacing:-0.559px;'>7 Issues:</span>
<svg style='left:1724px;top:208px;' width='12' height='11' viewBox='0 0 12 11'><rect x='0' y='0' width='12' height='9' rx='1.5' fill='#7cacf8'/><path d='M3 3H9M3 5.5H8' stroke='#282828' stroke-width='1'/></svg>
<span style='left:1737px;top:207.34px;font:400 12px/12px "Liberation Sans", sans-serif;color:#c7c7c7;letter-spacing:0.312px;'>7</span>
<div style='left:1751px;top:205px;width:1px;height:17px;background:#555'></div>
<span style='left:1762px;top:207.34px;font:400 12px/12px "Liberation Sans", sans-serif;color:#9a9a9a;letter-spacing:-0.131px;'>5 hidden</span>
<svg style='left:1818px;top:206px;' width='15' height='15' viewBox='0 0 15 15'><circle cx='7.5' cy='7.5' r='5' fill='none' stroke='#c7c7c7' stroke-width='2.5' stroke-dasharray='2.1 1.8'/><circle cx='7.5' cy='7.5' r='3' fill='none' stroke='#c7c7c7' stroke-width='1.3'/></svg>
<div style='left:1670px;top:226px;width:250px;height:1px;background:#4a4a4a'></div>
<div style='left:1670px;top:227px;width:236px;height:9px;background:#282828;overflow:hidden'></div>
<span style='left:1698px;top:225.57px;font:400 11px/11px "Liberation Mono", monospace;color:#e3e3e3;letter-spacing:0.000px;'>development mode.</span>
<div style='left:1670px;top:227px;width:236px;height:3px;background:#282828'></div>
<div style='left:1698px;top:238.5px;width:178px;height:1px;background:#4a4a4a'></div>
<span style='left:1698px;top:243.77px;font:400 11px/11px "Liberation Mono", monospace;color:#7cacf8;letter-spacing:0.000px;text-decoration:underline'>force-logout-listener.serv…</span>
<span style='left:1698px;top:258.17px;font:400 11px/11px "Liberation Mono", monospace;color:#e3e3e3;letter-spacing:0.000px;'>[ForceLogoutListener]</span>
<span style='left:1698px;top:272.57px;font:400 11px/11px "Liberation Mono", monospace;color:#e3e3e3;letter-spacing:0.000px;'>Initializing for session:</span>
<span style='left:1698px;top:286.97px;font:400 11px/11px "Liberation Mono", monospace;color:#e3e3e3;letter-spacing:0.000px;'>69308ca6...</span>
<span style='left:1698px;top:306.87px;font:400 11px/11px "Liberation Mono", monospace;color:#7cacf8;letter-spacing:0.000px;text-decoration:underline'>force-logout-listener.serv…</span>
<span style='left:1698px;top:321.27px;font:400 11px/11px "Liberation Mono", monospace;color:#e3e3e3;letter-spacing:0.000px;'>[ForceLogoutListener]</span>
<span style='left:1698px;top:335.67px;font:400 11px/11px "Liberation Mono", monospace;color:#e3e3e3;letter-spacing:0.000px;'>Initialized successfully</span>
<span style='left:1698px;top:354.97px;font:400 11px/11px "Liberation Mono", monospace;color:#7cacf8;letter-spacing:0.000px;text-decoration:underline'>course-overview.component.…</span>
<span style='left:1698px;top:369.37px;font:400 11px/11px "Liberation Mono", monospace;color:#e3e3e3;letter-spacing:0.000px;'>OverlayPanel is deprecated.</span>
<span style='left:1698px;top:383.77px;font:400 11px/11px "Liberation Mono", monospace;color:#e3e3e3;letter-spacing:0.000px;'>Use Popover instead.</span>
<span style='left:1698px;top:403.07px;font:400 11px/11px "Liberation Mono", monospace;color:#7cacf8;letter-spacing:0.000px;text-decoration:underline'>course-overview.component.…</span>
<span style='left:1698px;top:417.47px;font:400 11px/11px "Liberation Mono", monospace;color:#e3e3e3;letter-spacing:0.000px;'>OverlayPanel is deprecated.</span>
<span style='left:1698px;top:431.87px;font:400 11px/11px "Liberation Mono", monospace;color:#e3e3e3;letter-spacing:0.000px;'>Use Popover instead.</span>
<span style='left:1698px;top:451.17px;font:400 11px/11px "Liberation Mono", monospace;color:#7cacf8;letter-spacing:0.000px;text-decoration:underline'>course-overview.component.…</span>
<span style='left:1698px;top:465.57px;font:400 11px/11px "Liberation Mono", monospace;color:#e3e3e3;letter-spacing:0.000px;'>OverlayPanel is deprecated.</span>
<span style='left:1698px;top:479.97px;font:400 11px/11px "Liberation Mono", monospace;color:#e3e3e3;letter-spacing:0.000px;'>Use Popover instead.</span>
<span style='left:1698px;top:499.97px;font:400 11px/11px "Liberation Mono", monospace;color:#7cacf8;letter-spacing:0.000px;text-decoration:underline'>course-overview.component.…</span>
<span style='left:1698px;top:514.37px;font:400 11px/11px "Liberation Mono", monospace;color:#e3e3e3;letter-spacing:0.000px;'>TabView component is</span>
<span style='left:1698px;top:528.77px;font:400 11px/11px "Liberation Mono", monospace;color:#e3e3e3;letter-spacing:0.000px;'>deprecated as of v18. Use</span>
<span style='left:1698px;top:543.17px;font:400 11px/11px "Liberation Mono", monospace;color:#e3e3e3;letter-spacing:0.000px;'>Tabs component instead.</span>
<div style='left:1698px;top:302.2px;width:178px;height:1px;background:#4a4a4a'></div>
<div style='left:1698px;top:350.4px;width:178px;height:1px;background:#4a4a4a'></div>
<div style='left:1698px;top:398.3px;width:178px;height:1px;background:#4a4a4a'></div>
<div style='left:1698px;top:447.2px;width:178px;height:1px;background:#4a4a4a'></div>
<div style='left:1698px;top:495.8px;width:178px;height:1px;background:#4a4a4a'></div>
<div style='left:1698px;top:557.4px;width:178px;height:1px;background:#4a4a4a'></div>
<span style='left:1698px;top:563.57px;font:400 11px/11px "Liberation Mono", monospace;color:#e3e3e3;letter-spacing:0.000px;'>[Si</span>
<span style='left:1724.5px;top:563.57px;font:400 11px/11px "Liberation Mono", monospace;color:#7cacf8;letter-spacing:0.000px;text-decoration:underline'>signalr.service.ts:192</span>
<span style='left:1698px;top:577.97px;font:400 11px/11px "Liberation Mono", monospace;color:#e3e3e3;letter-spacing:0.000px;'>gnalR] Triggering session</span>
<span style='left:1698px;top:592.37px;font:400 11px/11px "Liberation Mono", monospace;color:#e3e3e3;letter-spacing:0.000px;'>validation after page</span>
<span style='left:1698px;top:606.77px;font:400 11px/11px "Liberation Mono", monospace;color:#e3e3e3;letter-spacing:0.000px;'>refresh</span>
<div style='left:1674px;top:622.3px;width:227px;height:100.5px;background:#4e3534;border-radius:6px'></div>
<svg style='left:1682px;top:625.8px;' width='12' height='12' viewBox='0 0 12 12'><circle cx='6' cy='6' r='6' fill='#e46962'/><path d='M3.8 3.8L8.2 8.2M8.2 3.8L3.8 8.2' stroke='#4e3534' stroke-width='1.4'/></svg>
<span style='left:1698px;top:626.37px;font:400 11px/11px "Liberation Mono", monospace;color:#7cacf8;letter-spacing:0.000px;text-decoration:underline'>CM_55bcbe5c-5ac3-4da…-8b20…</span>
<svg style='left:1858px;top:637.8px;' width='12' height='12' viewBox='0 0 12 12'><circle cx='6' cy='6' r='5.3' fill='none' stroke='#7cacf8' stroke-width='1.3'/><path d='M4 3V9M4 9L2.5 7.5M8 9V3M8 3L9.5 4.5' stroke='#7cacf8' stroke-width='1.1' fill='none'/></svg>
<span style='left:1698px;top:653.87px;font:400 11px/11px "Liberation Mono", monospace;color:#e3e3e3;letter-spacing:0.000px;'>GET</span>
<span style='left:1698px;top:668.27px;font:400 11px/11px "Liberation Mono", monospace;color:#7cacf8;letter-spacing:0.000px;text-decoration:underline'>https://calimaticstore.blo…</span>
<span style='left:1698px;top:682.67px;font:400 11px/11px "Liberation Mono", monospace;color:#e3e3e3;letter-spacing:0.000px;'>403 (This request is not</span>
<span style='left:1698px;top:697.07px;font:400 11px/11px "Liberation Mono", monospace;color:#e3e3e3;letter-spacing:0.000px;'>authorized to perform this</span>
<span style='left:1698px;top:711.47px;font:400 11px/11px "Liberation Mono", monospace;color:#e3e3e3;letter-spacing:0.000px;'>operation.)</span>
<div style='left:1674px;top:728.4px;width:227px;height:100.5px;background:#4e3534;border-radius:6px'></div>
<svg style='left:1682px;top:731.9px;' width='12' height='12' viewBox='0 0 12 12'><circle cx='6' cy='6' r='6' fill='#e46962'/><path d='M3.8 3.8L8.2 8.2M8.2 3.8L3.8 8.2' stroke='#4e3534' stroke-width='1.4'/></svg>
<span style='left:1698px;top:732.47px;font:400 11px/11px "Liberation Mono", monospace;color:#7cacf8;letter-spacing:0.000px;text-decoration:underline'>CM_55bcbe5c-5ac3-4da…-8b20…</span>
<svg style='left:1858px;top:743.9px;' width='12' height='12' viewBox='0 0 12 12'><circle cx='6' cy='6' r='5.3' fill='none' stroke='#7cacf8' stroke-width='1.3'/><path d='M4 3V9M4 9L2.5 7.5M8 9V3M8 3L9.5 4.5' stroke='#7cacf8' stroke-width='1.1' fill='none'/></svg>
<span style='left:1698px;top:759.97px;font:400 11px/11px "Liberation Mono", monospace;color:#e3e3e3;letter-spacing:0.000px;'>GET</span>
<span style='left:1698px;top:774.37px;font:400 11px/11px "Liberation Mono", monospace;color:#7cacf8;letter-spacing:0.000px;text-decoration:underline'>https://calimaticstore.blo…</span>
<span style='left:1698px;top:788.77px;font:400 11px/11px "Liberation Mono", monospace;color:#e3e3e3;letter-spacing:0.000px;'>403 (This request is not</span>
<span style='left:1698px;top:803.17px;font:400 11px/11px "Liberation Mono", monospace;color:#e3e3e3;letter-spacing:0.000px;'>authorized to perform this</span>
<span style='left:1698px;top:817.57px;font:400 11px/11px "Liberation Mono", monospace;color:#e3e3e3;letter-spacing:0.000px;'>operation.)</span>
<svg style='left:1686px;top:838px;' width='8' height='11' viewBox='0 0 8 11'><path d='M1.5 1.5L6 5.5L1.5 9.5' stroke='#7cacf8' stroke-width='1.4' fill='none'/></svg>
<svg style='left:1906px;top:231px;' width='12' height='8' viewBox='0 0 12 8'><path d='M1 7H11L6 1z' fill='#9a9a9a'/></svg>
<div style='left:1908px;top:398px;width:9px;height:460px;background:#6a6a6a;border-radius:5px'></div>
<svg style='left:1906px;top:861px;' width='12' height='8' viewBox='0 0 12 8'><path d='M1 1H11L6 7z' fill='#9a9a9a'/></svg>
<div style='left:1670px;top:874px;width:250px;height:1px;background:#4f4f4f'></div>
<div style='left:1670px;top:875px;width:250px;height:26px;background:#3c3c3c'></div>
<div style='left:1670px;top:901px;width:250px;height:1px;background:#4f4f4f'></div>
<svg style='left:1684.1999999999998px;top:882.1px;' width='2.8' height='11.8' viewBox='0 0 2.8 11.8'><circle cx='1.4' cy='1.4' r='1.4' fill='#c7c7c7'/><circle cx='1.4' cy='5.9' r='1.4' fill='#c7c7c7'/><circle cx='1.4' cy='10.4' r='1.4' fill='#c7c7c7'/></svg>
<svg style='left:1702px;top:883px;' width='14' height='11' viewBox='0 0 14 11'><path d='M1 1L5.5 5.5L1 10M7 1L11.5 5.5L7 10' stroke='#c7c7c7' stroke-width='1.3' fill='none'/></svg>
<div style='left:1698px;top:898.5px;width:20px;height:3px;background:#7cacf8;border-radius:2px'></div>
<svg style='left:1867px;top:881px;' width='14' height='14' viewBox='0 0 14 14'><rect x='1' y='1' width='12' height='12' rx='1' fill='none' stroke='#c7c7c7' stroke-width='1.3'/><path d='M8.5 1V13' stroke='#c7c7c7' stroke-width='1.3'/></svg>
<svg style='left:1895.5px;top:882.5px;' width='11' height='11' viewBox='0 0 11 11'><path d='M1 1L10 10M10 1L1 10' stroke='#c7c7c7' stroke-width='1.3' fill='none'/></svg>
<svg style='left:1685px;top:916.4px;' width='12' height='12' viewBox='0 0 12 12'><rect x='0' y='0' width='12' height='12' rx='2' fill='#7cacf8'/><path d='M2.5 6.2L5 8.7L9.8 3.6' stroke='#1f1f1f' stroke-width='1.5' fill='none'/></svg>
<span style='left:1703px;top:916.54px;font:400 12px/12px "Liberation Sans", sans-serif;color:#e3e3e3;letter-spacing:-0.486px;'>CPU usage</span>
<span style='right:1691px;top:916.54px;font:400 12px/12px "Liberation Sans", sans-serif;color:#f2c84b;letter-spacing:-0.465px;'>0.4%</span>
<svg style='left:1685px;top:944.7px;' width='12' height='12' viewBox='0 0 12 12'><rect x='0' y='0' width='12' height='12' rx='2' fill='#7cacf8'/><path d='M2.5 6.2L5 8.7L9.8 3.6' stroke='#1f1f1f' stroke-width='1.5' fill='none'/></svg>
<span style='left:1703px;top:944.84px;font:400 12px/12px "Liberation Sans", sans-serif;color:#e3e3e3;letter-spacing:-0.435px;'>JS heap size</span>
<span style='right:1691px;top:944.84px;font:400 12px/12px "Liberation Sans", sans-serif;color:#c58af9;letter-spacing:-0.393px;'>128 MB</span>
<svg style='left:1685px;top:972.8px;' width='12' height='12' viewBox='0 0 12 12'><rect x='0' y='0' width='12' height='12' rx='2' fill='#7cacf8'/><path d='M2.5 6.2L5 8.7L9.8 3.6' stroke='#1f1f1f' stroke-width='1.5' fill='none'/></svg>
<span style='left:1703px;top:972.94px;font:400 12px/12px "Liberation Sans", sans-serif;color:#e3e3e3;letter-spacing:-0.003px;'>DOM Nodes</span>
<span style='right:1691px;top:972.94px;font:400 12px/12px "Liberation Sans", sans-serif;color:#6bd88c;letter-spacing:-0.284px;'>25,490</span>
<svg style='left:1881px;top:907px;' width='12' height='8' viewBox='0 0 12 8'><path d='M1 7H11L6 1z' fill='#9a9a9a'/></svg>
<div style='left:1883px;top:920px;width:9px;height:51px;background:#6a6a6a;border-radius:5px'></div>
<div style='left:1895px;top:902px;width:1px;height:89px;background:#444'></div>
<svg style='left:1906px;top:907px;' width='12' height='8' viewBox='0 0 12 8'><path d='M1 7H11L6 1z' fill='#9a9a9a'/></svg>
<div style='left:1908px;top:920px;width:9px;height:42px;background:#6a6a6a;border-radius:5px'></div>
<div style='left:1920px;top:0px;width:1642px;height:991px;background:#ffffff'></div>
<div style='left:1920px;top:0px;width:1642px;height:62px;background:#d3e3fd'></div>
<div style='left:1928px;top:8px;width:35px;height:34px;background:#e8f0fe;border-radius:10px'></div>
<svg style='left:1940.0px;top:21.5px;' width='12' height='7.0' viewBox='0 0 12 7.0'><path d='M1 1L6.0 6.0L11 1' stroke='#1f1f1f' stroke-width='2' fill='none'/></svg>
<div style='left:1971px;top:7px;width:290px;height:44px;background:#ffffff;border-radius:10px 10px 0 0'></div>
<div style='left:1961px;top:40px;width:10px;height:10px;background:radial-gradient(circle at 0 0, #d3e3fd 9.5px, #ffffff 10.5px)'></div>
<div style='left:2261px;top:40px;width:10px;height:10px;background:radial-gradient(circle at 100% 0, #d3e3fd 9.5px, #ffffff 10.5px)'></div>
<svg style='left:1980px;top:15px;' width='20' height='20' viewBox='0 0 20 20'><defs><radialGradient id='gw8' cx='0.45' cy='0.45' r='0.6'><stop offset='0' stop-color='#fbf6f6'/><stop offset='0.7' stop-color='#e6d2d2'/><stop offset='1' stop-color='#7a6a6a'/></radialGradient><linearGradient id='gc8' x1='0.6' y1='0' x2='0.3' y2='1'><stop offset='0' stop-color='#0a4f60'/><stop offset='0.45' stop-color='#1fcbe8'/><stop offset='1' stop-color='#12a7c6'/></linearGradient></defs><circle cx='12.34' cy='10.00' r='6.30' fill='url(#gw8)'/><path d='M13.29 7.79q3.15 0.32 4.72 1.89l-0.32 4.41q-2.20 0.63 -3.15 -2.52q0.63 -1.89 -1.26 -3.78z M9.19 10.00q2.20 -0.32 2.83 1.89l-1.26 3.47z' fill='#707070'/><path d='M14.23 2.05A9.00 9.00 0 1 0 15.54 17.09L15.30 15.56A6.30 6.30 0 1 1 13.43 3.80z' fill='url(#gc8)'/></svg>
<span style='left:2010px;top:18.33px;font:400 14.5px/14.5px "Liberation Sans", sans-serif;color:#1f1f1f;letter-spacing:-0.365px;'>CALIMATIC</span>
<svg style='left:2234.0px;top:19.0px;' width='12' height='12' viewBox='0 0 12 12'><path d='M1 1L11 11M11 1L1 11' stroke='#1f1f1f' stroke-width='2' fill='none'/></svg>
<svg style='left:2277.5px;top:17.5px;' width='15' height='15' viewBox='0 0 15 15'><path d='M7.5 1V14M1 7.5H14' stroke='#1f1f1f' stroke-width='1.8' fill='none'/></svg>
<div style='left:1920px;top:50px;width:1642px;height:101px;background:#ffffff;border-radius:10px 0 0 0'></div>
<svg style='left:1939.25px;top:70.25px;' width='16.5' height='16.5' viewBox='0 0 16.5 16.5'><path d='M15.5 8.25H1.5M8.25 1L1 8.25L8.25 15.5' stroke='#474747' stroke-width='1.8' fill='none'/></svg>
<svg style='left:1983.75px;top:70.25px;' width='16.5' height='16.5' viewBox='0 0 16.5 16.5'><path d='M1 8.25H15.0M8.25 1L15.5 8.25L8.25 15.5' stroke='#a8a8a8' stroke-width='1.8' fill='none'/></svg>
<svg style='left:2027.5px;top:68.0px;' width='20' height='20' viewBox='0 0 20 20'><path d='M16.40 11.13A6.50 6.50 0 1 1 14.35 5.17' stroke='#474747' stroke-width='1.9' fill='none'/><path d='M17.13 3.17V8.05H10.97z' fill='#474747' stroke='#474747' stroke-width='1.14' stroke-linejoin='miter'/></svg>
<div style='left:2070px;top:58px;width:1550px;height:42px;background:#e9eef6;border-radius:21px'></div>
<div style='left:2077px;top:65px;width:29px;height:29px;background:#f8fafd;border-radius:15px'></div>
<svg style='left:2084.0px;top:71.5px;' width='15' height='15' viewBox='0 0 15 15'><circle cx='3.0' cy='3.75' r='2.1' stroke='#1f1f1f' stroke-width='1.8' fill='none'/><path d='M6.75 3.75H14.7M0.3 11.25H8.25' stroke='#1f1f1f' stroke-width='1.8'/><circle cx='12.0' cy='11.25' r='2.1' stroke='#1f1f1f' stroke-width='1.8' fill='none'/></svg>
<span style='left:2116px;top:71.99px;font:400 17.5px/17.5px "Liberation Sans", sans-serif;color:#1f1f1f;letter-spacing:-0.036px;'>core-lms.calibermatrix.com/CoursePlayer/GetCourseCurriculumDetail?CourseId=526&amp;CurrentItemId=12929&amp;isForStep=true&amp;StudentID=&amp;isForStudent=True</span>
<svg style='left:3497px;top:69px;' width='22' height='22' viewBox='0 0 22 22'><circle cx='8.5' cy='8.5' r='6.5' fill='none' stroke='#1f1f1f' stroke-width='2'/><path d='M5 8.5H12M13 13L20 20' stroke='#1f1f1f' stroke-width='2'/></svg>
<svg style='left:3537.5px;top:69.5px;' width='20' height='20' viewBox='0 0 20 20'><polygon points='10.00,1.50 12.38,7.22 18.56,7.72 13.85,11.75 15.29,17.78 10.00,14.55 4.71,17.78 6.15,11.75 1.44,7.72 7.62,7.22' stroke='#1f1f1f' stroke-width='1.8' fill='none' stroke-linejoin='round'/></svg>
<svg style='left:1937px;top:116.5px;' width='16' height='16' viewBox='0 0 16 16'><rect x='0' y='0' width='4' height='4' fill='#ea4335'/><rect x='6' y='0' width='4' height='4' fill='#ea4335'/><rect x='12' y='0' width='4' height='4' fill='#ea4335'/><rect x='0' y='6' width='4' height='4' fill='#34a853'/><rect x='6' y='6' width='4' height='4' fill='#4285f4'/><rect x='12' y='6' width='4' height='4' fill='#fbbc04'/><rect x='0' y='12' width='4' height='4' fill='#34a853'/><rect x='6' y='12' width='4' height='4' fill='#fbbc04'/><rect x='12' y='12' width='4' height='4' fill='#fbbc04'/></svg>
<span style='left:1963px;top:116.60px;font:400 15px/15px "Liberation Sans", sans-serif;color:#1f1f1f;letter-spacing:-0.301px;'>Apps</span>
<svg style='left:2016px;top:116px;' width='19' height='19' viewBox='0 0 19 19'><rect x='1' y='1' width='6.5' height='6.5' fill='none' stroke='#3c3c3c' stroke-width='2'/><rect x='11' y='1' width='6.5' height='6.5' fill='none' stroke='#3c3c3c' stroke-width='2'/><rect x='1' y='11' width='6.5' height='6.5' fill='none' stroke='#3c3c3c' stroke-width='2'/><rect x='11' y='11' width='6.5' height='6.5' fill='none' stroke='#3c3c3c' stroke-width='2'/></svg>
<div style='left:2055px;top:115px;width:2px;height:19px;background:#c9dbf7'></div>
<svg style='left:2077.5px;top:114.8px;' width='14.6' height='20' viewBox='0 0 14.6 20'><path d='M4.779999999999999 19V6.3Q4.779999999999999 1.5 8.19 1.5Q13.1 1.5 13.1 3.6M1 8.1H10.08' stroke='#3d7bd8' stroke-width='2.88' fill='none'/></svg>
<span style='left:2101.7px;top:116.60px;font:400 15px/15px "Liberation Sans", sans-serif;color:#1f1f1f;letter-spacing:-0.492px;'>FlowHCM</span>
<svg style='left:2185.4px;top:115px;' width='20' height='20' viewBox='0 0 20 20'><defs><radialGradient id='gw9' cx='0.45' cy='0.45' r='0.6'><stop offset='0' stop-color='#fbf6f6'/><stop offset='0.7' stop-color='#e6d2d2'/><stop offset='1' stop-color='#7a6a6a'/></radialGradient><linearGradient id='gc9' x1='0.6' y1='0' x2='0.3' y2='1'><stop offset='0' stop-color='#0a4f60'/><stop offset='0.45' stop-color='#1fcbe8'/><stop offset='1' stop-color='#12a7c6'/></linearGradient></defs><circle cx='12.34' cy='10.00' r='6.30' fill='url(#gw9)'/><path d='M13.29 7.79q3.15 0.32 4.72 1.89l-0.32 4.41q-2.20 0.63 -3.15 -2.52q0.63 -1.89 -1.26 -3.78z M9.19 10.00q2.20 -0.32 2.83 1.89l-1.26 3.47z' fill='#707070'/><path d='M14.23 2.05A9.00 9.00 0 1 0 15.54 17.09L15.30 15.56A6.30 6.30 0 1 1 13.43 3.80z' fill='url(#gc9)'/></svg>
<span style='left:2213.8px;top:116.60px;font:400 15px/15px "Liberation Sans", sans-serif;color:#1f1f1f;letter-spacing:-0.246px;'>Board</span>
<svg style='left:2273.5px;top:115px;' width='20' height='20' viewBox='0 0 20 20'><defs><radialGradient id='gw10' cx='0.45' cy='0.45' r='0.6'><stop offset='0' stop-color='#fbf6f6'/><stop offset='0.7' stop-color='#e6d2d2'/><stop offset='1' stop-color='#7a6a6a'/></radialGradient><linearGradient id='gc10' x1='0.6' y1='0' x2='0.3' y2='1'><stop offset='0' stop-color='#0a4f60'/><stop offset='0.45' stop-color='#1fcbe8'/><stop offset='1' stop-color='#12a7c6'/></linearGradient></defs><circle cx='12.34' cy='10.00' r='6.30' fill='url(#gw10)'/><path d='M13.29 7.79q3.15 0.32 4.72 1.89l-0.32 4.41q-2.20 0.63 -3.15 -2.52q0.63 -1.89 -1.26 -3.78z M9.19 10.00q2.20 -0.32 2.83 1.89l-1.26 3.47z' fill='#707070'/><path d='M14.23 2.05A9.00 9.00 0 1 0 15.54 17.09L15.30 15.56A6.30 6.30 0 1 1 13.43 3.80z' fill='url(#gc10)'/></svg>
<span style='left:2301.6px;top:116.60px;font:400 15px/15px "Liberation Sans", sans-serif;color:#1f1f1f;letter-spacing:-0.467px;'>Dev V2</span>
<svg style='left:2368.8px;top:115px;' width='20' height='20' viewBox='0 0 20 20'><defs><radialGradient id='gw11' cx='0.45' cy='0.45' r='0.6'><stop offset='0' stop-color='#fbf6f6'/><stop offset='0.7' stop-color='#e6d2d2'/><stop offset='1' stop-color='#7a6a6a'/></radialGradient><linearGradient id='gc11' x1='0.6' y1='0' x2='0.3' y2='1'><stop offset='0' stop-color='#0a4f60'/><stop offset='0.45' stop-color='#1fcbe8'/><stop offset='1' stop-color='#12a7c6'/></linearGradient></defs><circle cx='12.34' cy='10.00' r='6.30' fill='url(#gw11)'/><path d='M13.29 7.79q3.15 0.32 4.72 1.89l-0.32 4.41q-2.20 0.63 -3.15 -2.52q0.63 -1.89 -1.26 -3.78z M9.19 10.00q2.20 -0.32 2.83 1.89l-1.26 3.47z' fill='#707070'/><path d='M14.23 2.05A9.00 9.00 0 1 0 15.54 17.09L15.30 15.56A6.30 6.30 0 1 1 13.43 3.80z' fill='url(#gc11)'/></svg>
<span style='left:2396.6px;top:116.60px;font:400 15px/15px "Liberation Sans", sans-serif;color:#1f1f1f;letter-spacing:-0.243px;'>Demo Dev V3</span>
<svg style='left:2507.4px;top:115px;' width='20' height='20' viewBox='0 0 20 20'><defs><radialGradient id='gw12' cx='0.45' cy='0.45' r='0.6'><stop offset='0' stop-color='#fbf6f6'/><stop offset='0.7' stop-color='#e6d2d2'/><stop offset='1' stop-color='#7a6a6a'/></radialGradient><linearGradient id='gc12' x1='0.6' y1='0' x2='0.3' y2='1'><stop offset='0' stop-color='#0a4f60'/><stop offset='0.45' stop-color='#1fcbe8'/><stop offset='1' stop-color='#12a7c6'/></linearGradient></defs><circle cx='12.34' cy='10.00' r='6.30' fill='url(#gw12)'/><path d='M13.29 7.79q3.15 0.32 4.72 1.89l-0.32 4.41q-2.20 0.63 -3.15 -2.52q0.63 -1.89 -1.26 -3.78z M9.19 10.00q2.20 -0.32 2.83 1.89l-1.26 3.47z' fill='#707070'/><path d='M14.23 2.05A9.00 9.00 0 1 0 15.54 17.09L15.30 15.56A6.30 6.30 0 1 1 13.43 3.80z' fill='url(#gc12)'/></svg>
<span style='left:2534.8px;top:116.60px;font:400 15px/15px "Liberation Sans", sans-serif;color:#1f1f1f;letter-spacing:-0.288px;'>Portal Dev V3</span>
<svg style='left:2790.3px;top:115px;' width='20' height='20' viewBox='0 0 20 20'><defs><radialGradient id='gw13' cx='0.45' cy='0.45' r='0.6'><stop offset='0' stop-color='#fbf6f6'/><stop offset='0.7' stop-color='#e6d2d2'/><stop offset='1' stop-color='#7a6a6a'/></radialGradient><linearGradient id='gc13' x1='0.6' y1='0' x2='0.3' y2='1'><stop offset='0' stop-color='#0a4f60'/><stop offset='0.45' stop-color='#1fcbe8'/><stop offset='1' stop-color='#12a7c6'/></linearGradient></defs><circle cx='12.34' cy='10.00' r='6.30' fill='url(#gw13)'/><path d='M13.29 7.79q3.15 0.32 4.72 1.89l-0.32 4.41q-2.20 0.63 -3.15 -2.52q0.63 -1.89 -1.26 -3.78z M9.19 10.00q2.20 -0.32 2.83 1.89l-1.26 3.47z' fill='#707070'/><path d='M14.23 2.05A9.00 9.00 0 1 0 15.54 17.09L15.30 15.56A6.30 6.30 0 1 1 13.43 3.80z' fill='url(#gc13)'/></svg>
<span style='left:2818.4px;top:116.60px;font:400 15px/15px "Liberation Sans", sans-serif;color:#1f1f1f;letter-spacing:-0.615px;'>Demo PROD</span>
<svg style='left:2643px;top:115px;' width='8' height='20' viewBox='0 0 8 20'><path d='M6 2Q1 10 6 18' stroke='#6aaed6' stroke-width='2.5' fill='none'/></svg>
<span style='left:2672.6px;top:116.60px;font:400 15px/15px "Liberation Sans", sans-serif;color:#1f1f1f;letter-spacing:-0.553px;'>Live Test PROD</span>
<svg style='left:2923px;top:115.5px;' width='19' height='19' viewBox='0 0 19 19'><rect x='0' y='0' width='19' height='19' rx='2.28' fill='#2aa84f'/><path d='M2.66 7.6000000000000005H16.34M7.9799999999999995 7.6000000000000005V17.48' stroke='#fff' stroke-width='2.85'/></svg>
<span style='left:2950px;top:116.60px;font:400 15px/15px "Liberation Sans", sans-serif;color:#1f1f1f;letter-spacing:-0.720px;'>Test Cases</span>
<svg style='left:3038px;top:115.5px;' width='19' height='19' viewBox='0 0 19 19'><rect x='0' y='0' width='19' height='19' rx='2.28' fill='#2aa84f'/><path d='M2.66 7.6000000000000005H16.34M7.9799999999999995 7.6000000000000005V17.48' stroke='#fff' stroke-width='2.85'/></svg>
<span style='left:3065px;top:116.60px;font:400 15px/15px "Liberation Sans", sans-serif;color:#1f1f1f;letter-spacing:-1.209px;'>BUGS/ISSUES</span>
<svg style='left:3175px;top:115px;' width='20' height='20' viewBox='0 0 20 20'><circle cx='10' cy='10' r='10' fill='#f4632a'/><path d='M12.5 4.5L6.0 10L12.5 15.5' stroke='#fff' stroke-width='2.8000000000000003' fill='none'/><circle cx='12.5' cy='10' r='1.7999999999999998' fill='#fff'/></svg>
<span style='left:3202px;top:116.60px;font:400 15px/15px "Liberation Sans", sans-serif;color:#1f1f1f;letter-spacing:-0.137px;'>Devenv - Calimatic...</span>
<svg style='left:3367px;top:116.5px;' width='23.5' height='17' viewBox='0 0 23.5 17'><path d='M1 4.5L5.460000000000001 15L9.75 6.75L14.04 15L19.5 4.5' stroke='#14a36f' stroke-width='4.20' fill='none' stroke-linejoin='bevel'/><text x='17.94' y='6.75' font-size='7.5' fill='#14a36f' font-family='Liberation Sans' font-weight='bold'>3</text></svg>
<span style='left:3394.6px;top:116.60px;font:400 15px/15px "Liberation Sans", sans-serif;color:#1f1f1f;letter-spacing:-0.786px;'>HTML EDITOR</span>
<div style='left:1920px;top:151px;width:1642px;height:48px;background:#1271c6'></div>
<div style='left:1928px;top:160px;width:79px;height:32px;background:#ffffff'></div>
<svg style='left:1928px;top:160px;' width='79' height='32' viewBox='0 0 79 32'><g transform='rotate(-3 13.5 15.0)'><rect x='3.5' y='4.5' width='20' height='21' fill='#1e86cc' stroke='#c9a24a' stroke-width='1'/><text x='0' y='0' transform='translate(13.5 22.0) scale(0.72 1)' text-anchor='middle' font-family='Liberation Sans' font-weight='bold' font-size='17' fill='#f4f4f4'>D</text></g><g transform='rotate(2 32 17.0)'><rect x='22' y='6.5' width='20' height='21' fill='#1e86cc' stroke='#c9a24a' stroke-width='1'/><text x='0' y='0' transform='translate(32 24.0) scale(0.72 1)' text-anchor='middle' font-family='Liberation Sans' font-weight='bold' font-size='17' fill='#f4f4f4'>E</text></g><g transform='rotate(-2 47 15.0)'><rect x='37' y='4.5' width='20' height='21' fill='#1e86cc' stroke='#c9a24a' stroke-width='1'/><text x='0' y='0' transform='translate(47 22.0) scale(0.72 1)' text-anchor='middle' font-family='Liberation Sans' font-weight='bold' font-size='17' fill='#f4f4f4'>M</text></g><g transform='rotate(3 65 15.5)'><rect x='55' y='5' width='20' height='21' fill='#1e86cc' stroke='#c9a24a' stroke-width='1'/><text x='0' y='0' transform='translate(65 22.5) scale(0.72 1)' text-anchor='middle' font-family='Liberation Sans' font-weight='bold' font-size='17' fill='#f4f4f4'>O</text></g></svg>
<span style='left:2045.4px;top:166.90px;font:400 13px/13px "Liberation Sans", sans-serif;color:#d2e2f4;letter-spacing:0.221px;'>Dashboard</span>
<span style='left:2139.5px;top:166.90px;font:400 13px/13px "Liberation Sans", sans-serif;color:#d2e2f4;letter-spacing:0.049px;'>Boards</span>
<span style='left:2209.9px;top:166.90px;font:400 13px/13px "Liberation Sans", sans-serif;color:#d2e2f4;letter-spacing:0.288px;'>Admin</span>
<span style='left:2276.5px;top:166.90px;font:400 13px/13px "Liberation Sans", sans-serif;color:#d2e2f4;letter-spacing:0.142px;'>Franchises</span>
<span style='left:2370px;top:166.90px;font:700 13px/13px "Liberation Sans", sans-serif;color:#ffffff;letter-spacing:-0.290px;'>Courses</span>
<span style='left:2448.5px;top:166.90px;font:400 13px/13px "Liberation Sans", sans-serif;color:#d2e2f4;letter-spacing:0.125px;'>Events</span>
<span style='left:2517.4px;top:166.90px;font:400 13px/13px "Liberation Sans", sans-serif;color:#d2e2f4;letter-spacing:0.207px;'>Partners</span>
<span style='left:2596.4px;top:166.90px;font:400 13px/13px "Liberation Sans", sans-serif;color:#d2e2f4;letter-spacing:-0.001px;'>Families</span>
<span style='left:2673px;top:166.90px;font:400 13px/13px "Liberation Sans", sans-serif;color:#d2e2f4;letter-spacing:0.421px;'>Students</span>
<span style='left:2756.8px;top:166.90px;font:400 13px/13px "Liberation Sans", sans-serif;color:#d2e2f4;letter-spacing:0.337px;'>Staff</span>
<span style='left:2813.7px;top:166.90px;font:400 13px/13px "Liberation Sans", sans-serif;color:#d2e2f4;letter-spacing:-0.670px;'>CRM</span>
<span style='left:2870px;top:166.90px;font:400 13px/13px "Liberation Sans", sans-serif;color:#d2e2f4;letter-spacing:0.076px;'>Parties</span>
<span style='left:2939.4px;top:166.90px;font:400 13px/13px "Liberation Sans", sans-serif;color:#d2e2f4;letter-spacing:0.210px;'>Reports</span>
<span style='left:3015.2px;top:166.90px;font:400 13px/13px "Liberation Sans", sans-serif;color:#d2e2f4;letter-spacing:0.074px;'>Financial</span>
<svg style='left:2386px;top:191px;' width='16' height='8' viewBox='0 0 16 8'><path d='M0 8L8 0L16 8z' fill='#ffffff'/></svg>
<div style='left:2541px;top:199px;width:79px;height:47px;background:#f3f3f3'></div>
<div style='left:2541px;top:245.5px;width:79px;height:2.5px;background:#1271c6'></div>
<span style='left:2555.5px;top:215.80px;font:400 13px/13px "Liberation Sans", sans-serif;color:#333333;letter-spacing:0.154px;'>Courses</span>
<span style='left:2635px;top:215.80px;font:400 13px/13px "Liberation Sans", sans-serif;color:#333333;letter-spacing:0.368px;'>Central</span>
<span style='left:2709.6px;top:215.80px;font:400 13px/13px "Liberation Sans", sans-serif;color:#333333;letter-spacing:0.037px;'>Class</span>
<span style='left:2773px;top:215.80px;font:400 13px/13px "Liberation Sans", sans-serif;color:#333333;letter-spacing:0.206px;'>Enrollment Form Setup</span>
<span style='left:2941px;top:215.80px;font:400 13px/13px "Liberation Sans", sans-serif;color:#333333;letter-spacing:0.254px;'>Calendar</span>
<span style='left:3026.8px;top:215.80px;font:400 13px/13px "Liberation Sans", sans-serif;color:#333333;letter-spacing:0.222px;'>Transactions</span>
<span style='left:3134px;top:215.80px;font:400 13px/13px "Liberation Sans", sans-serif;color:#333333;letter-spacing:0.442px;'>Attendance</span>
<div style='left:1920px;top:247px;width:1642px;height:1px;background:#c4c4c4'></div>
<div style='left:1920px;top:248px;width:1642px;height:2px;background:linear-gradient(#e2e2e2,#f8f8f8)'></div>
<div style='left:1920px;top:250px;width:1642px;height:51px;background:#f8f8f8'></div>
<div style='left:1920px;top:301px;width:1642px;height:1px;background:#dcdcdc'></div>
<span style='left:1934.5px;top:268.15px;font:400 14px/14px "Liberation Sans", sans-serif;color:#8e949c;letter-spacing:-0.180px;'>Search Item</span>
<svg style='left:2267px;top:268px;' width='15' height='15' viewBox='0 0 15 15'><circle cx='6' cy='6' r='4.6' fill='none' stroke='#444' stroke-width='2'/><path d='M9.5 9.5L13.5 13.5' stroke='#444' stroke-width='2.2'/></svg>
<span style='left:2309.5px;top:269.00px;font:700 13px/13px "Liberation Sans", sans-serif;color:#222222;letter-spacing:0.545px;'>Belt-Test-Course</span>
<svg style='left:1930.5px;top:328px;' width='8' height='5.5' viewBox='0 0 8 5.5'><path d='M0 0H8L4 5z' fill='#111'/></svg>
<span style='left:1943.4px;top:324.07px;font:700 13.5px/13.5px "Liberation Sans", sans-serif;color:#222222;letter-spacing:0.327px;'>Belt-Test-Course</span>
<div style='left:1920px;top:351px;width:365px;height:1.3px;background:#7a7a7a'></div>
<div style='left:1920px;top:352.3px;width:365px;height:45.7px;background:#f8f8f8'></div>
<svg style='left:1930px;top:365px;' width='18' height='20' viewBox='0 0 18 20'><rect x='1' y='1' width='13' height='18' fill='none' stroke='#222' stroke-width='1.3'/><path d='M4.5 1V19M6.5 4.5H11M6.5 7H10' stroke='#222' stroke-width='1.1'/><path d='M14.5 4H16.5V7.5H14.5M14.5 9H16.5V12.5H14.5M14.5 14H16.5V17.5H14.5' fill='none' stroke='#222' stroke-width='1'/></svg>
<span style='left:1958px;top:368.50px;font:400 13px/13px "Liberation Sans", sans-serif;color:#222222;letter-spacing:1.276px;'>@#$</span>
<svg style='left:1945px;top:412.8px;' width='20' height='21' viewBox='0 0 20 21'><path d='M1 1H10L15 6V19H1z' fill='none' stroke='#222' stroke-width='1.3' stroke-linejoin='round'/><path d='M10 1V6H15' fill='none' stroke='#222' stroke-width='1.3'/></svg>
<span style='left:1971.6px;top:416.17px;font:400 13.5px/13.5px "Liberation Sans", sans-serif;color:#222222;letter-spacing:-0.007px;'>general</span>
<svg style='left:1945px;top:460.5px;' width='20' height='21' viewBox='0 0 20 21'><path d='M1 1H10L15 6V19H1z' fill='none' stroke='#222' stroke-width='1.3' stroke-linejoin='round'/><path d='M10 1V6H15' fill='none' stroke='#222' stroke-width='1.3'/></svg>
<span style='left:1971.6px;top:463.87px;font:400 13.5px/13.5px "Liberation Sans", sans-serif;color:#222222;letter-spacing:0.049px;'>general22</span>
<svg style='left:1945px;top:508px;' width='20' height='21' viewBox='0 0 20 21'><path d='M1 1H10L15 6V19H1z' fill='none' stroke='#222' stroke-width='1.3' stroke-linejoin='round'/><path d='M10 1V6H15' fill='none' stroke='#222' stroke-width='1.3'/></svg>
<span style='left:1971.6px;top:511.37px;font:400 13.5px/13.5px "Liberation Sans", sans-serif;color:#222222;letter-spacing:0.297px;'>ztest</span>
<svg style='left:1945px;top:556.4px;' width='20' height='21' viewBox='0 0 20 21'><path d='M1 4H13V17H1z' fill='none' stroke='#222' stroke-width='1.3'/><path d='M13 8L19 4V17L13 13' fill='none' stroke='#222' stroke-width='1.3'/><path d='M3 1H10V4H3z' fill='none' stroke='#222' stroke-width='1.2'/></svg>
<span style='left:1971.6px;top:559.77px;font:400 13.5px/13.5px "Liberation Sans", sans-serif;color:#222222;letter-spacing:0.241px;'>Video</span>
<svg style='left:1945px;top:603.5px;' width='20' height='21' viewBox='0 0 20 21'><path d='M4 1H11L16 6V19H4z' fill='none' stroke='#222' stroke-width='1.3'/><path d='M11 1V6H16' fill='none' stroke='#222' stroke-width='1.3'/><rect x='1' y='3' width='4' height='15' rx='2' fill='#fff' stroke='#222' stroke-width='1.3'/></svg>
<span style='left:1971.6px;top:606.87px;font:400 13.5px/13.5px "Liberation Sans", sans-serif;color:#222222;letter-spacing:0.147px;'>Maths New Assessment</span>
<svg style='left:1945px;top:696.7px;' width='20' height='21' viewBox='0 0 20 21'><path d='M4 1H11L16 6V19H4z' fill='none' stroke='#222' stroke-width='1.3'/><path d='M11 1V6H16' fill='none' stroke='#222' stroke-width='1.3'/><rect x='1' y='3' width='4' height='15' rx='2' fill='#fff' stroke='#222' stroke-width='1.3'/></svg>
<span style='left:1971.6px;top:700.07px;font:400 13.5px/13.5px "Liberation Sans", sans-serif;color:#222222;letter-spacing:-0.054px;'>QA Assessment12</span>
<svg style='left:1945px;top:743.8px;' width='20' height='21' viewBox='0 0 20 21'><path d='M4 1H11L16 6V19H4z' fill='none' stroke='#222' stroke-width='1.3'/><path d='M11 1V6H16' fill='none' stroke='#222' stroke-width='1.3'/><rect x='1' y='3' width='4' height='15' rx='2' fill='#fff' stroke='#222' stroke-width='1.3'/></svg>
<span style='left:1971.6px;top:747.17px;font:400 13.5px/13.5px "Liberation Sans", sans-serif;color:#222222;letter-spacing:0.121px;'>naruto uzamaki</span>
<svg style='left:1945px;top:793px;' width='20' height='21' viewBox='0 0 20 21'><path d='M4 1H11L16 6V19H4z' fill='none' stroke='#222' stroke-width='1.3'/><path d='M11 1V6H16' fill='none' stroke='#222' stroke-width='1.3'/><rect x='1' y='3' width='4' height='15' rx='2' fill='#fff' stroke='#222' stroke-width='1.3'/></svg>
<span style='left:1971.6px;top:796.37px;font:400 13.5px/13.5px "Liberation Sans", sans-serif;color:#222222;letter-spacing:0.338px;'>Maths New Assessmentdfdfdfdddd</span>
<svg style='left:1945px;top:885.9px;' width='20' height='21' viewBox='0 0 20 21'><path d='M4 1H11L16 6V19H4z' fill='none' stroke='#222' stroke-width='1.3'/><path d='M11 1V6H16' fill='none' stroke='#222' stroke-width='1.3'/><rect x='1' y='3' width='4' height='15' rx='2' fill='#fff' stroke='#222' stroke-width='1.3'/></svg>
<span style='left:1971.6px;top:889.27px;font:400 13.5px/13.5px "Liberation Sans", sans-serif;color:#222222;letter-spacing:0.247px;'>Maths New Assessmentdsdfgdfgyeryrtuyui776</span>
<svg style='left:1945px;top:977px;' width='20' height='21' viewBox='0 0 20 21'><path d='M4 1H11L16 6V19H4z' fill='none' stroke='#222' stroke-width='1.3'/><path d='M11 1V6H16' fill='none' stroke='#222' stroke-width='1.3'/><rect x='1' y='3' width='4' height='15' rx='2' fill='#fff' stroke='#222' stroke-width='1.3'/></svg>
<span style='left:1971.6px;top:980.37px;font:400 13.5px/13.5px "Liberation Sans", sans-serif;color:#222222;letter-spacing:0.271px;'>Maths New Assessment gsdfgdfgfdgfdg fdgdf</span>
<span style='right:1286.6999999999998px;top:556.65px;font:400 14px/14px "Liberation Sans", sans-serif;color:#1a6fc6;letter-spacing:-0.013px;'>Video</span>
<div style='left:1934px;top:446.2px;width:351px;height:1px;background:#e6e6e6'></div>
<div style='left:1934px;top:494.7px;width:351px;height:1px;background:#e6e6e6'></div>
<div style='left:1934px;top:542.4px;width:351px;height:1px;background:#e6e6e6'></div>
<div style='left:1934px;top:590.6px;width:351px;height:1px;background:#e6e6e6'></div>
<div style='left:1934px;top:683px;width:351px;height:1px;background:#e6e6e6'></div>
<div style='left:1934px;top:731px;width:351px;height:1px;background:#e6e6e6'></div>
<div style='left:1934px;top:779.6px;width:351px;height:1px;background:#e6e6e6'></div>
<div style='left:1934px;top:871.7px;width:351px;height:1px;background:#e6e6e6'></div>
<div style='left:1934px;top:964.5px;width:351px;height:1px;background:#e6e6e6'></div>
<div style='left:1948px;top:646.8px;width:90.59999999999991px;height:18.90000000000009px;background:#1271c6;border-radius:3px'></div>
<span style='left:1993.3px;top:652.23px;transform:translateX(-50%);font:700 9.3px/9.3px "Liberation Sans", sans-serif;color:#ffffff;letter-spacing:0.711px;'>3 QUESTION</span>
<span style='left:2042.1px;top:652.53px;font:400 9.3px/9.3px "Liberation Sans", sans-serif;color:#1a6fc6;letter-spacing:1.055px;'>60 MIN</span>
<div style='left:2151px;top:694px;width:88.80000000000018px;height:18.799999999999955px;background:#1271c6;border-radius:3px'></div>
<span style='left:2195.4px;top:699.43px;transform:translateX(-50%);font:700 9.3px/9.3px "Liberation Sans", sans-serif;color:#ffffff;letter-spacing:0.585px;'>1 QUESTION</span>
<span style='left:2243.3px;top:699.73px;font:400 9.3px/9.3px "Liberation Sans", sans-serif;color:#1a6fc6;letter-spacing:0.861px;'>0 MIN</span>
<div style='left:2142px;top:741.8px;width:90.5px;height:18.800000000000068px;background:#1271c6;border-radius:3px'></div>
<span style='left:2187.25px;top:747.23px;transform:translateX(-50%);font:700 9.3px/9.3px "Liberation Sans", sans-serif;color:#ffffff;letter-spacing:0.704px;'>4 QUESTION</span>
<span style='left:2236.0px;top:747.53px;font:400 9.3px/9.3px "Liberation Sans", sans-serif;color:#1a6fc6;letter-spacing:1.005px;'>60 MIN</span>
<div style='left:1948px;top:835.6px;width:90.70000000000005px;height:18.899999999999977px;background:#1271c6;border-radius:3px'></div>
<span style='left:1993.35px;top:841.03px;transform:translateX(-50%);font:700 9.3px/9.3px "Liberation Sans", sans-serif;color:#ffffff;letter-spacing:0.718px;'>3 QUESTION</span>
<span style='left:2042.2px;top:841.33px;font:400 9.3px/9.3px "Liberation Sans", sans-serif;color:#1a6fc6;letter-spacing:1.039px;'>60 MIN</span>
<div style='left:1948px;top:929px;width:90.70000000000005px;height:18.5px;background:#1271c6;border-radius:3px'></div>
<span style='left:1993.35px;top:934.43px;transform:translateX(-50%);font:700 9.3px/9.3px "Liberation Sans", sans-serif;color:#ffffff;letter-spacing:0.718px;'>3 QUESTION</span>
<span style='left:2042.2px;top:934.73px;font:400 9.3px/9.3px "Liberation Sans", sans-serif;color:#1a6fc6;letter-spacing:1.039px;'>60 MIN</span>
<div style='left:2285px;top:309px;width:9px;height:68px;background:#c1c1c1;border-radius:5px'></div>
<div style='left:2294px;top:302px;width:1px;height:689px;background:#dddddd'></div>
<span style='left:2333px;top:360.65px;font:700 20.5px/20.5px "Liberation Sans", sans-serif;color:#333333;letter-spacing:1.459px;'>Maths New Assessment</span>
<span style='left:2948px;top:412.92px;font:700 19px/19px "Liberation Sans", sans-serif;color:#15316d;letter-spacing:0.712px;'>Maths New Assessment</span>
<span style='left:3024.2px;top:457.15px;font:400 14px/14px "Liberation Sans", sans-serif;color:#222222;letter-spacing:0.459px;'>jnhbgvhnbg</span>
<div style='left:2588px;top:505px;width:950px;height:389px;border:1px solid #2aa5df'></div>
<span style='left:2673px;top:538.15px;font:400 14px/14px "Liberation Sans", sans-serif;color:#1b1b1b;letter-spacing:0.188px;'>Test Duration:</span>
<span style='right:66.5px;top:538.15px;font:400 14px/14px "Liberation Sans", sans-serif;color:#1b1b1b;letter-spacing:0.388px;'>01:00:00</span>
<span style='left:2676.6px;top:589.15px;font:400 14px/14px "Liberation Sans", sans-serif;color:#1b1b1b;letter-spacing:0.076px;'>Total Questions P:</span>
<span style='right:66.5px;top:589.15px;font:400 14px/14px "Liberation Sans", sans-serif;color:#1b1b1b;letter-spacing:0.203px;'>3</span>
<span style='left:2676px;top:641.55px;font:400 14px/14px "Liberation Sans", sans-serif;color:#1b1b1b;letter-spacing:-0.032px;'>Pass Percentage:</span>
<span style='right:66.5px;top:641.55px;font:400 14px/14px "Liberation Sans", sans-serif;color:#1b1b1b;letter-spacing:0.391px;'>78.00</span>
<span style='left:2676.2px;top:691.85px;font:400 14px/14px "Liberation Sans", sans-serif;color:#1b1b1b;letter-spacing:0.201px;'>Status:</span>
<span style='right:66.5px;top:691.85px;font:400 14px/14px "Liberation Sans", sans-serif;color:#1b1b1b;letter-spacing:0.425px;'>Not Started</span>
<span style='left:2676.2px;top:743.15px;font:400 14px/14px "Liberation Sans", sans-serif;color:#1b1b1b;letter-spacing:0.146px;'>Auto Evaluation:</span>
<span style='right:66.5px;top:743.15px;font:400 14px/14px "Liberation Sans", sans-serif;color:#1b1b1b;letter-spacing:-0.281px;'>Yes</span>
<span style='left:2676.2px;top:794.15px;font:400 14px/14px "Liberation Sans", sans-serif;color:#1b1b1b;letter-spacing:0.189px;'>Start Date:</span>
<span style='right:66.5px;top:794.15px;font:400 14px/14px "Liberation Sans", sans-serif;color:#1b1b1b;letter-spacing:0.363px;'>Not Specified</span>
<span style='left:2676.2px;top:845.15px;font:400 14px/14px "Liberation Sans", sans-serif;color:#1b1b1b;letter-spacing:-0.005px;'>Due Date:</span>
<span style='right:66.5px;top:845.15px;font:400 14px/14px "Liberation Sans", sans-serif;color:#1b1b1b;letter-spacing:0.363px;'>Not Specified</span>
<div style='left:2617px;top:571.4px;width:892px;height:1px;background:#dedede'></div>
<div style='left:2617px;top:622.2px;width:892px;height:1px;background:#dedede'></div>
<div style='left:2617px;top:674.3px;width:892px;height:1px;background:#dedede'></div>
<div style='left:2617px;top:725.2px;width:892px;height:1px;background:#dedede'></div>
<div style='left:2617px;top:776px;width:892px;height:1px;background:#dedede'></div>
<div style='left:2617px;top:827px;width:892px;height:1px;background:#dedede'></div>
<svg style='left:2634px;top:531px;' width='22' height='22' viewBox='0 0 22 22'><circle cx='11' cy='10.5' r='8.8' fill='none' stroke='#111' stroke-width='2.8'/><path d='M10.8 5V11H6.5' fill='none' stroke='#111' stroke-width='2.2'/></svg>
<svg style='left:2633.5px;top:580.5px;' width='24' height='22' viewBox='0 0 24 22'><path d='M0.5 8H15V13.5H18V16.5H15V20.5H10.5A3 3 0 0 0 4.5 20.5H0.5z' fill='#111'/><rect x='5.9' y='3' width='3.2' height='5.5' fill='#111'/><circle cx='7.5' cy='2.8' r='2.6' fill='#111'/><circle cx='19.3' cy='15' r='2.6' fill='#111'/></svg>
<svg style='left:2635px;top:634px;' width='20' height='20' viewBox='0 0 20 20'><circle cx='5' cy='5' r='3.3' fill='none' stroke='#111' stroke-width='2.6'/><circle cx='15' cy='15' r='3.3' fill='none' stroke='#111' stroke-width='2.6'/><path d='M17 2L3 18' stroke='#111' stroke-width='3'/></svg>
<svg style='left:2631px;top:685px;' width='28' height='22' viewBox='0 0 28 22'><path d='M1.5 1V20.5H27' fill='none' stroke='#111' stroke-width='2'/><path d='M5 16L11 10L15 13L22 6' fill='none' stroke='#111' stroke-width='2.6'/><path d='M18 4H24V10z' fill='#111'/></svg>
<svg style='left:2632px;top:734.5px;' width='27' height='26' viewBox='0 0 27 26'><polygon points='17.49,12.58 17.41,14.25 14.93,15.12 14.40,16.24 15.30,18.71 14.06,19.83 11.69,18.70 10.53,19.11 9.42,21.49 7.75,21.41 6.88,18.93 5.76,18.40 3.29,19.30 2.17,18.06 3.30,15.69 2.89,14.53 0.51,13.42 0.59,11.75 3.07,10.88 3.60,9.76 2.70,7.29 3.94,6.17 6.31,7.30 7.47,6.89 8.58,4.51 10.25,4.59 11.12,7.07 12.24,7.60 14.71,6.70 15.83,7.94 14.70,10.31 15.11,11.47' fill='#111'/><circle cx='9' cy='13' r='2.6' fill='#fff'/><polygon points='25.49,5.67 25.40,6.98 23.73,7.59 23.21,8.37 23.28,10.16 22.11,10.73 20.74,9.59 19.80,9.53 18.29,10.48 17.20,9.76 17.51,8.00 17.09,7.16 15.51,6.33 15.60,5.02 17.27,4.41 17.79,3.63 17.72,1.84 18.89,1.27 20.26,2.41 21.20,2.47 22.71,1.52 23.80,2.24 23.49,4.00 23.91,4.84' fill='#111'/><circle cx='20.5' cy='6' r='1.6' fill='#fff'/><polygon points='25.49,19.17 25.40,20.48 23.73,21.09 23.21,21.87 23.28,23.66 22.11,24.23 20.74,23.09 19.80,23.03 18.29,23.98 17.20,23.26 17.51,21.50 17.09,20.66 15.51,19.83 15.60,18.52 17.27,17.91 17.79,17.13 17.72,15.34 18.89,14.77 20.26,15.91 21.20,15.97 22.71,15.02 23.80,15.74 23.49,17.50 23.91,18.34' fill='#111'/><circle cx='20.5' cy='19.5' r='1.6' fill='#fff'/></svg>
<svg style='left:2633px;top:787px;' width='22' height='24' viewBox='0 0 22 24'><rect x='1.2' y='5' width='19.6' height='18' fill='none' stroke='#111' stroke-width='2'/><rect x='1.2' y='5' width='19.6' height='4' fill='#111'/><path d='M6 1V6M16 1V6' stroke='#111' stroke-width='2.4'/><path d='M7.5 12L14.5 19M14.5 12L7.5 19' stroke='#111' stroke-width='1.8'/></svg>
<svg style='left:2633px;top:838px;' width='22' height='24' viewBox='0 0 22 24'><rect x='1.2' y='5' width='19.6' height='18' fill='none' stroke='#111' stroke-width='2'/><rect x='1.2' y='5' width='19.6' height='4' fill='#111'/><path d='M6 1V6M16 1V6' stroke='#111' stroke-width='2.4'/><path d='M7.5 12L14.5 19M14.5 12L7.5 19' stroke='#111' stroke-width='1.8'/></svg>
<div style='left:2532px;top:501px;width:990px;height:425px;border:4px solid #ff0000;border-radius:3px'></div>
<span style='left:2347px;top:958.84px;font:700 12px/12px "Liberation Sans", sans-serif;color:#1a6fc6;letter-spacing:1.373px;'>PREVIOUS</span>
<span style='left:2347px;top:974.80px;font:400 13px/13px "Liberation Sans", sans-serif;color:#8a8a8a;letter-spacing:0.397px;'>Video</span>
</body></html>
